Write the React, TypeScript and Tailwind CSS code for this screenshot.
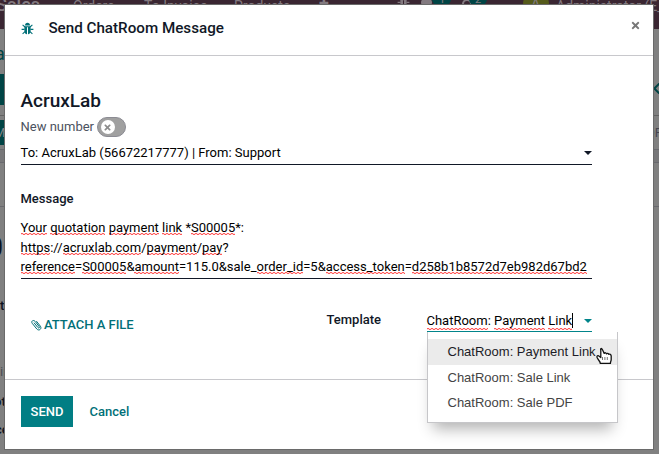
import type { ReactNode } from "react";
import { FaTimes, FaChevronLeft } from "react-icons/fa";

function BugIcon({ className }: { className: string }) {
  return (
    <svg className={className} viewBox="0 0 13 13" fill="currentColor">
      <path d="M4 3.4C4 1.6 5 .8 6.5 .8S9 1.6 9 3.4Z" />
      <path d="M3.4 4.2H9.6V9C9.6 11 8.6 12 7 12.3V5.2H6V12.3C4.4 12 3.4 11 3.4 9Z" />
      <path d="M1.6 2.9 4 5M11.4 2.9 9 5M.6 7.4H3.6M9.4 7.4H12.4M1.6 11.8 4 9.6M11.4 11.8 9 9.6" fill="none" stroke="currentColor" strokeWidth="1.1" />
    </svg>
  );
}

function PaperclipIcon() {
  return (
    <svg className="h-[12px] w-[12px]" viewBox="0 0 12 12" fill="none" stroke="currentColor" strokeWidth="1" strokeLinecap="round">
      <path d="M4.2 4 8 8.6C8.8 9.6 10 8.7 9.2 7.6L5 2.3C3.4 .4 .7 2.2 2.2 4.3L6.8 10C9 12.4 12.2 9.8 10.4 7.2L6.6 2.4" />
    </svg>
  );
}

function Misspelled({ children }: { children: ReactNode }) {
  return (
    <span className="bg-[linear-gradient(90deg,#ff5a5a_50%,#ffd9d9_50%),linear-gradient(90deg,#ffd9d9_50%,#ff5a5a_50%)] bg-[length:4px_1px,4px_1px] bg-[position:0_calc(100%_-_1px),0_100%] bg-repeat-x">
      {children}
    </span>
  );
}

function Caret({ className }: { className: string }) {
  return <span className={`h-0 w-0 border-x-4 border-t-4 border-x-transparent ${className}`} />;
}

function BackgroundPage() {
  return (
    <div className="flex h-full flex-col overflow-hidden bg-[#808080] whitespace-nowrap text-[#0b1220]">
      <nav className="flex h-[29px] shrink-0 items-start bg-[#3a2632] text-[14px] leading-4 text-[#837a80]">
        <span className="-mt-[5px] -ml-[4px] w-[77px] shrink-0 text-[18px] leading-5 font-medium">Sales</span>
        <span className="-mt-[2px] w-[71px] shrink-0">Orders</span>
        <span className="-mt-[2px] w-[90px] shrink-0">To Invoice</span>
        <span className="-mt-[2px] w-[85px] shrink-0">Products</span>
        <span className="-mt-[5px] w-[78px] shrink-0 text-[18px] font-bold">+</span>
        <BugIcon className="-mt-[5px] mr-[11px] h-[13px] w-[13px] shrink-0" />
        <span className="-mt-[2px] h-[9px] w-[11px] shrink-0 rounded-full bg-[#837a80]" />
        <span className="-mt-[8px] h-[14px] w-[19px] shrink-0 rounded-full bg-[#004445] pl-[7px] text-[11px]">1</span>
        <span className="-mt-[1px] ml-[11px] h-[10px] w-[10px] shrink-0 rounded-full border-2 border-[#837a80]" />
        <span className="-mt-[8px] -ml-[3px] h-[14px] w-[18px] shrink-0 rounded-full bg-[#004445] pl-[6px] text-[11px]">2</span>
        <span className="-mt-[9px] mr-[7px] ml-[36px] h-[26px] w-[26px] shrink-0 rounded-full bg-[#555a1b] pl-[8px] leading-[26px]">A</span>
        <span className="-mt-[2px] shrink-0">Administrator (E_ecommerce)</span>
      </nav>
      <div className="flex h-[45px] shrink-0 items-center pt-[3px] text-[18px] text-[#004445]">
        <span className="-ml-[5px]">a</span>
      </div>
      <div className="flex h-[42px] shrink-0 items-start justify-between border-b border-[#626262] text-[#004445]">
        <span className="h-[31px] w-10 bg-[#004445]" />
        <FaChevronLeft className="mt-[8px] -mr-[4px] h-[13px] w-[13px]" />
      </div>
      <div className="flex h-[34px] shrink-0 items-center justify-between border-b border-[#69696e] text-[13px]">
        <span className="h-[25px] w-10 bg-[#004445] leading-[25px] text-[#858585]"><span className="-ml-[6px]">M</span></span>
        <span className="-mr-[3px] text-[#454550]">OF</span>
      </div>
      <div className="h-[13px] shrink-0 border-b border-[#69696e] bg-[#777779]" />
      <div className="h-[44px] shrink-0 border-b border-[#69696e]" />
      <div className="h-[87px] shrink-0 pt-[20px] text-[30px] leading-[40px] font-medium"><span className="-ml-[14px]">0</span></div>
      <div className="h-[68px] shrink-0 pt-[2px] text-[13px] leading-[20px] font-medium">t</div>
      <div className="flex flex-col text-[13px] leading-[20px]">
        <span className="text-[#4c4e55]">in</span>
        <span className="mt-[10px] -ml-[6px] font-medium">ot</span>
        <span className="mt-[8px] -ml-[5px] font-medium">ce</span>
      </div>
    </div>
  );
}

function HandPointer() {
  return (
    <svg className="absolute top-[8px] left-[168px] h-[18px] w-[16px]" viewBox="0 0 16 18" fill="white" stroke="#111" strokeWidth="1.3" strokeLinejoin="round">
      <path d="M4.8 9.5V3.2C4.2 1.2 5.5 0.8 6.6 3L8.2 6.4C8.8 5.4 10.2 5.6 10.5 6.8 11.3 6 12.4 6.3 12.7 7.3 13.7 6.7 15.2 7.4 15.2 9V12.5C15.2 14 14.4 14.6 14.4 16.4H4.3C4.3 14.4 2.8 14 1.2 10.8 0.4 8.8 2 8 3.2 9.2L4.8 10.6Z" />
      <path d="M6.5 10v3M8.9 10v3M11.3 10v3" strokeWidth="0.6" />
    </svg>
  );
}

function TemplateMenu() {
  return (
    <ul className="absolute top-[12px] left-0 z-10 w-[191px] border border-t-0 border-[#c6c6c9] bg-white pt-[7px] pb-[6px] font-['Liberation_Sans',Arial,sans-serif] text-[13px] leading-[26px] text-[#444] shadow-[0_12px_14px_-6px_rgba(0,0,0,0.3)]">
      <li className="relative h-[26px] bg-[#ebebeb] pl-5 text-[#1c1c26]">
        ChatRoom: Payment Link
        <HandPointer />
      </li>
      <li className="h-[25px] pl-5">ChatRoom: Sale Link</li>
      <li className="h-[26px] pl-5">ChatRoom: Sale PDF</li>
    </ul>
  );
}

export default function App() {
  return (
    <div className="relative h-[454px] w-[659px] overflow-hidden font-[Roboto,sans-serif] text-[13px]">
      <BackgroundPage />
      <section className="absolute top-[5px] left-[5px] flex h-[444px] w-[648px] flex-col bg-white text-[#111827] shadow-[0_0_0_1px_#6a6a6a]">
        <header className="flex h-[51px] shrink-0 items-center border-b border-[#c8c8cc] px-4">
          <BugIcon className="mt-[-3px] h-[13px] w-[13px] text-[#017078]" />
          <h1 className="mt-[-4px] ml-[14.4px] flex-1 text-[15.2px] font-medium">Send ChatRoom Message</h1>
          <FaTimes className="mt-[-9px] mr-[-4px] h-[11px] w-[11px] text-[#777]" />
        </header>

        <main className="flex h-[324px] shrink-0 flex-col border-b border-[#c8c8cc] pl-[15.5px]">
          <h2 className="mt-[33px] text-[19px] leading-[24px] font-medium">AcruxLab</h2>
          <div className="mt-[3px] flex h-[22px] items-center text-[#4c5260]">
            <span>New number</span>
            <span className="ml-[2.5px] flex h-[20px] w-[29px] items-center rounded-full border border-[#8b8b93] bg-[#a0a0a0] pl-[3px]">
              <span className="flex h-[14px] w-[14px] items-center justify-center rounded-full bg-white">
                <FaTimes className="h-[9px] w-[9px] text-[#8c8c8c]" />
              </span>
            </span>
          </div>
          <div className="mt-[4px] flex h-[23px] w-[571.5px] items-center justify-between border-b border-[#111827] text-black">
            <span>To: AcruxLab (56672217777) | From: Support</span>
            <Caret className="border-t-[#111827]" />
          </div>
          <label className="mt-[24px] h-[20px] leading-[20px] font-medium">Message</label>
          <div className="mt-[9px] h-[61px] w-[571.5px] border-b border-[#111827] leading-[19.5px] text-black">
            <p>
              <Misspelled>Your</Misspelled> <Misspelled>quotation</Misspelled> <Misspelled>payment</Misspelled> <Misspelled>link</Misspelled> *<Misspelled>S00005</Misspelled>*:
            </p>
            <p>
              <Misspelled>https</Misspelled>://<Misspelled>acruxlab.com</Misspelled>/<Misspelled>payment</Misspelled>/<Misspelled>pay</Misspelled>?
            </p>
            <p className="whitespace-nowrap">
              <Misspelled>reference</Misspelled>=<Misspelled>S00005</Misspelled>&amp;<Misspelled>amount</Misspelled>=115.0&amp;sale_<Misspelled>order_id</Misspelled>=5&amp;<Misspelled>access_token</Misspelled>=<Misspelled>d258b1b8572d7eb982d67bd2</Misspelled>
            </p>
          </div>
          <div className="mt-[31px] flex h-[22px] w-[571.5px] items-start">
            <button className="mt-[5px] ml-[9.5px] flex w-[296.5px] items-center gap-[2px] leading-[20px] font-medium text-[#017078]">
              <PaperclipIcon />
              ATTACH A FILE
            </button>
            <label className="w-[100px] leading-[20px] font-medium">Template</label>
            <div className="relative flex h-[22px] flex-1 items-center justify-between border-b border-[#01848a] text-black">
              <span className="flex items-center whitespace-nowrap">
                <Misspelled>ChatRoom</Misspelled>:&nbsp;<Misspelled>Payment</Misspelled>&nbsp;<Misspelled>Link</Misspelled>
                <span className="h-[15px] w-px bg-black" />
              </span>
              <Caret className="border-t-[#01848a]" />
              <div className="absolute top-[10px] left-0">
                <TemplateMenu />
              </div>
            </div>
          </div>
        </main>

        <footer className="flex flex-1 items-start px-4 pt-4 font-medium">
          <button className="h-[31px] w-[52px] bg-[#017e84] text-white">SEND</button>
          <button className="ml-[16.5px] h-[31px] text-[#017078]">Cancel</button>
        </footer>
      </section>
    </div>
  );
}
